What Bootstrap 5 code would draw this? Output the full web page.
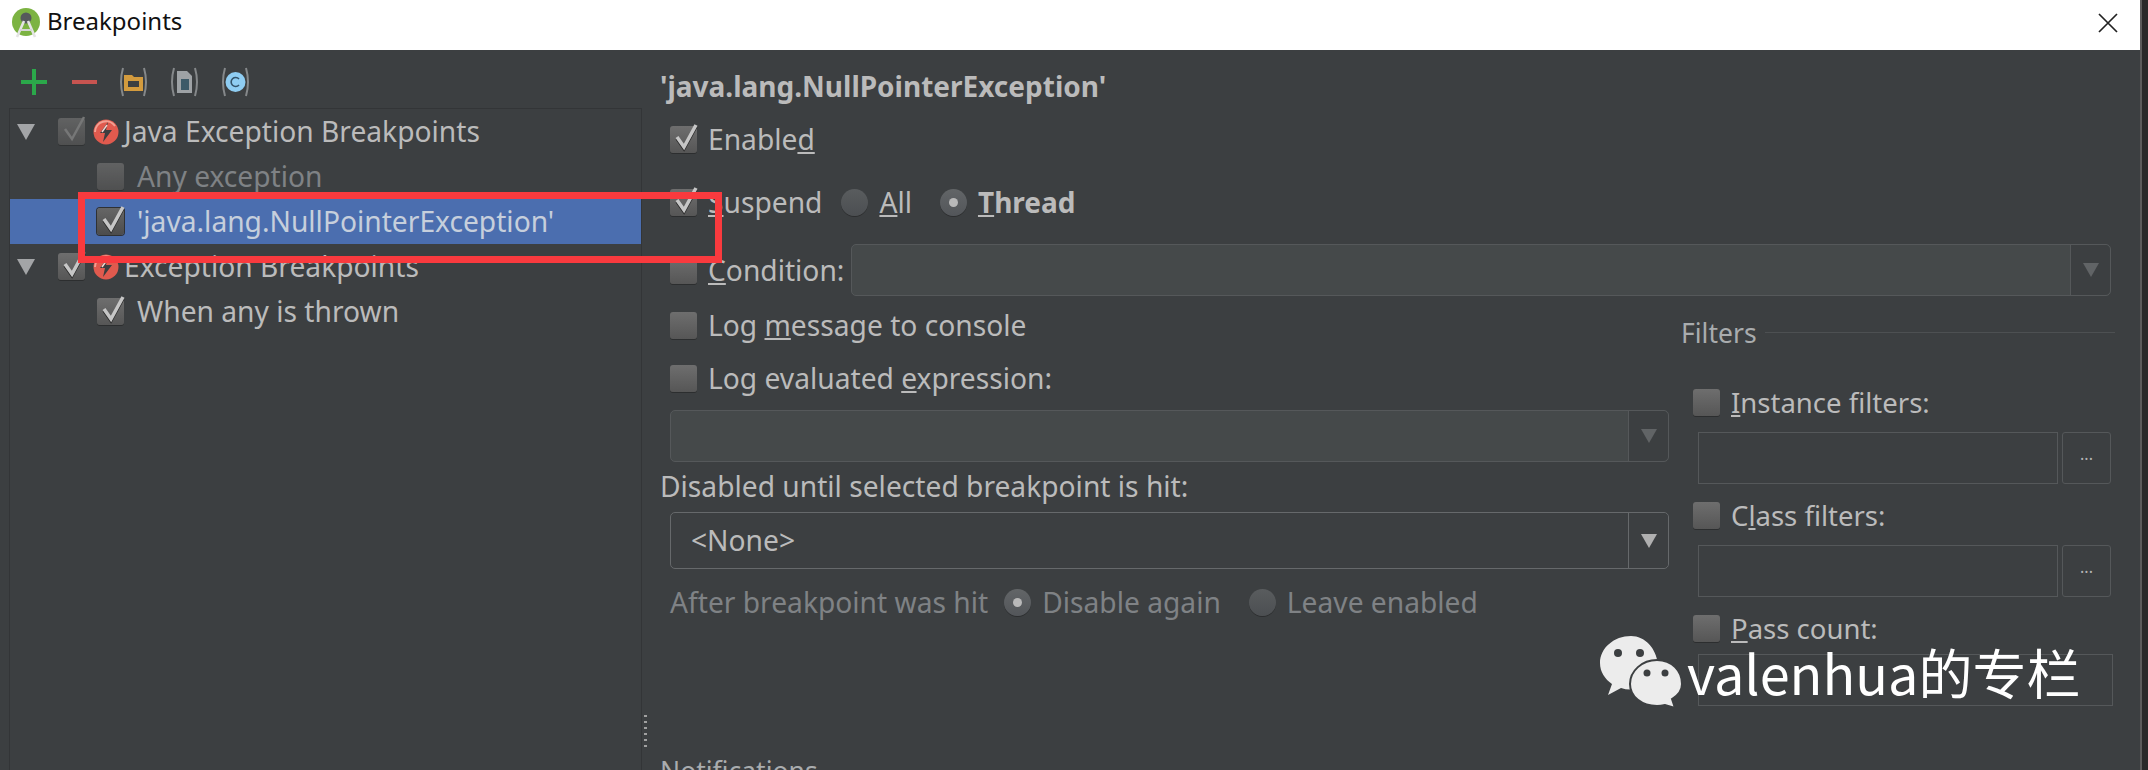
<!DOCTYPE html>
<html lang="en">
<head>
  <meta charset="UTF-8" />
  <title>Breakpoints</title>
  <meta name="viewport" content="width=device-width, initial-scale=1.0" />
  <link href="https://cdn.jsdelivr.net/npm/bootstrap@5.3.0/dist/css/bootstrap.min.css" rel="stylesheet">
  <style>
    html, body { margin: 0; height: 770px; overflow: hidden; background: #2a2a2a; }
    body { font-family: "Noto Sans", "Open Sans", sans-serif; font-size: 28.2px; color: #bbbbbb; }
    .dlg { position: relative; width: 2148px; height: 770px; overflow: hidden; border-right: 6px solid #2a2a2a; }
    .dlg-inner { width: 2142px; height: 770px; border-right: 2px solid #5c5c5c; background: #3c3f41; }
    .title-bar { height: 50px; background: #fff; color: #111; font-size: 24px; padding-left: 12px; padding-bottom: 5px; }
    .title-bar .ttl { margin-left: 7px; margin-top: -4px; }
    .close-x { margin-left: auto; margin-right: 22px; }
    .left-pane { width: 650px; height: 720px; flex: none; position: relative; }
    .tool-row { height: 58px; padding-left: 21px; padding-top: 5px; gap: 22px; }
    .tool-row .plus-ic { margin-right: 3px; }
    .tool-row svg { flex: none; }
    .tree-box { margin-left: 9px; margin-right: 8px; height: 700px; border-left: 1px solid #333537; border-right: 1px solid #333537; border-top: 1px solid #333537; }
    .tree-row { height: 45px; white-space: nowrap; }
    .tree-row.sel { background: #4b6eaf; color: #c6cfdc; }
    .tree-row .arrow { margin-left: 7px; margin-right: 23px; }
    .lvl-1 { padding-left: 87px; }
    .lvl-0-text { margin-left: 5px; }
    .lvl-1-text { margin-left: 13px; }
    .bp-icon { margin-left: 8px; }
    .dim-text { color: #7f8285; }
    .cb { width: 27px; height: 27px; flex: none; border-radius: 3px; background: linear-gradient(#6e6e6e, #565656); box-shadow: 0 1px 0 #2c2e2f; position: relative; display: inline-block; }
    .cb svg { position: absolute; left: 3px; top: -4px; }
    .cb.faded { opacity: .75; }
    .cb.sel-cb { background: linear-gradient(#666, #4c4c4c); box-shadow: 0 0 0 1px #2f3133; }
    .rd { width: 27px; height: 27px; flex: none; border-radius: 50%; background: linear-gradient(#626567, #53565a); box-shadow: 0 1px 0 #2c2e2f; display: inline-flex; align-items: center; justify-content: center; }
    .rd i { width: 9px; height: 9px; border-radius: 50%; background: #b9b9b9; }
    .rd.off-rd { background: linear-gradient(#595c5e, #4c4f52); }
    .rd-first { margin-left: 19px; }
    .rd-next { margin-left: 28px; }
    .rd-text { margin-left: 11px; }
    .right-pane { flex: 1; min-width: 0; padding-left: 10px; padding-right: 25px; }
    .head-row { height: 44px; margin-top: 14px; font-weight: 700; font-size: 28px; color: #bbb; white-space: nowrap; }
    .opt-row { height: 44px; padding-left: 10px; padding-bottom: 2px; white-space: nowrap; }
    .opt-row .cb + span { margin-left: 11px; }
    .opt-row .bold-text { font-weight: 700; font-size: 28px; }
    .mt-enabled { margin-top: 10px; }
    .mt-suspend { margin-top: 19px; }
    .mt-eval { margin-top: 9px; }
    .mt-after { margin-top: 12px; }
    .cond-row { height: 52px; margin-top: 19px; padding-left: 10px; white-space: nowrap; }
    .cond-row .cb + span { margin-left: 11px; }
    .combo { display: flex; border: 1px solid #55585a; border-radius: 5px; background: #45494a; flex: 1; min-width: 0; }
    .combo .val { flex: 1; padding-left: 20px; display: flex; align-items: center; }
    .combo .drop { width: 40px; flex: none; border-left: 1px solid #55585a; background: #3c3f41; display: flex; align-items: center; justify-content: center; border-radius: 0 5px 5px 0; }
    .cond-row .combo { margin-left: 7px; margin-right: 4px; }
    .combo-off { height: 52px; margin-left: 10px; margin-top: 9px; flex: none; }
    .combo-none { height: 57px; margin-left: 10px; margin-top: 3px; flex: none; background: #3c3f41; border-color: #66696b; }
    .combo-none .drop { border-left-color: #66696b; }
    .col-left { width: 1009px; flex: none; }
    .col-right { width: 434px; flex: none; margin-left: 12px; }
    .plain-row { height: 44px; margin-top: 3px; padding-bottom: 2px; white-space: nowrap; }
    .sect-row { height: 44px; margin-top: 16px; white-space: nowrap; color: #a9acae; font-size: 26.5px; }
    .sect-row hr { flex: 1; margin: -4px 0 0 8px; opacity: 1; border: 0; border-top: 1px solid #4d5052; }
    .flt-check { height: 44px; padding-left: 12px; white-space: nowrap; font-size: 27.5px; }
    .flt-check .cb + span { margin-left: 11px; margin-top: 1px; }
    .flt-input { height: 52px; margin-left: 17px; margin-right: 4px; margin-top: 8px; margin-bottom: 9px; }
    .flt-input.last-input { margin-right: 2px; margin-top: 4px; }
    .txt-box { flex: 1; border: 1px solid #55585a; min-width: 0; }
    .dots-btn { width: 49px; flex: none; margin-left: 4px; border: 1px solid #55585a; border-radius: 3px; font-size: 16px; color: #b5b5b5; display: flex; align-items: center; justify-content: center; padding-bottom: 8px; }
    .notif-row { height: 44px; margin-top: 35px; white-space: nowrap; color: #a9acae; font-size: 26.5px; }
    .notif-row hr { flex: 1; margin: 4px 0 0 8px; opacity: 1; border: 0; border-top: 1px solid #4d5052; }
    .grip { position: absolute; left: 644px; top: 715px; width: 3px; height: 33px; background: repeating-linear-gradient(#a0a0a0 0 2px, transparent 2px 6px); }
    .red-frame { position: absolute; left: 78px; top: 192px; width: 644px; height: 71px; border: 7px solid #f93a3e; }
    .wm-logo { position: absolute; left: 1600px; top: 636px; }
    .wm-text { position: absolute; left: 1687px; top: 633px; font-family: "Noto Sans CJK SC", sans-serif; font-size: 54px; line-height: 78px; color: #fff; white-space: nowrap; }
  </style>
</head>
<body>
<svg width="0" height="0" class="position-absolute">
  <symbol id="chk" viewBox="0 0 26 30"><path d="M4 15l7 10L23 3" fill="none" stroke="#2b2b2b" stroke-width="3.5" transform="translate(0 1.5)"/><path d="M4 15l7 10L23 3" fill="none" stroke="#c6c6c6" stroke-width="3.5"/></symbol>
  <symbol id="chk-dim" viewBox="0 0 26 30"><path d="M4 15l7 10L23 3" fill="none" stroke="#8a8a8a" stroke-width="2.5"/></symbol>
  <symbol id="bolt" viewBox="0 0 26 26"><circle cx="13" cy="13" r="12.5" fill="#e05a4e"/><path d="M2 13a11 11 0 0 1 20-6" fill="none" stroke="#f2a093" stroke-width="2"/><path d="M15 3L7 14h5l-2 9 9-12h-6z" fill="#3b3d3f"/><path d="M14 6l-5 7" stroke="#f6d5cf" stroke-width="1.5"/></symbol>
</svg>
<div class="dlg">
  <div class="dlg-inner">
    <div class="title-bar d-flex align-items-center">
      <svg width="28" height="30" viewBox="0 0 28 30">
        <circle cx="14" cy="14" r="14" fill="#7cb342"/>
        <circle cx="14" cy="10" r="5.5" fill="#55595c"/>
        <path d="M12 13L5 29M16 13l7 16" stroke="#e4e4e4" stroke-width="2.6" fill="none"/>
        <path d="M8 22h12" stroke="#d5d5d5" stroke-width="2"/>
      </svg>
      <span class="ttl">Breakpoints</span>
      <svg class="close-x" width="20" height="20" viewBox="0 0 20 20"><path d="M1 1l18 18M19 1L1 19" stroke="#222" stroke-width="1.7"/></svg>
    </div>
    <div class="d-flex">
      <div class="left-pane">
        <div class="tool-row d-flex align-items-center">
          <svg class="plus-ic" width="26" height="26" viewBox="0 0 26 26"><path d="M13 0v26M0 13h26" stroke="#2ba84a" stroke-width="4"/></svg>
          <svg width="25" height="26" viewBox="0 0 25 26"><path d="M0 13h25" stroke="#c75450" stroke-width="4"/></svg>
          <svg width="29" height="30" viewBox="0 0 29 30"><path d="M4 1Q0 15 4 29M25 1q4 14 0 28" fill="none" stroke="#85888a" stroke-width="2"/><path d="M5 8h8l2 2h9v14H5z" fill="#d39b3e"/><rect x="9" y="14" width="11" height="6" fill="#3c3f41"/></svg>
          <svg width="29" height="30" viewBox="0 0 29 30"><path d="M4 1Q0 15 4 29M25 1q4 14 0 28" fill="none" stroke="#85888a" stroke-width="2"/><path d="M7 4h10l5 5v17H7z" fill="#9ea2a5"/><path d="M11 12h8v11h-8z" fill="#3d5a68"/></svg>
          <svg width="29" height="30" viewBox="0 0 29 30"><path d="M4 1Q0 15 4 29M25 1q4 14 0 28" fill="none" stroke="#85888a" stroke-width="2"/><circle cx="14.5" cy="15" r="10" fill="#8fcdf2"/><path d="M18 12a4.5 4.5 0 1 0 0 6" fill="none" stroke="#33536a" stroke-width="1.6"/></svg>
        </div>
        <div class="tree-box">
          <div class="tree-row d-flex align-items-center">
            <svg class="arrow" width="18" height="16" viewBox="0 0 18 16"><path d="M0 0h18L9 16z" fill="#a3a5a7"/></svg>
            <span class="cb faded"><svg width="26" height="30"><use href="#chk-dim"/></svg></span>
            <svg class="bp-icon" width="26" height="26"><use href="#bolt"/></svg>
            <span class="lvl-0-text">Java Exception Breakpoints</span>
          </div>
          <div class="tree-row lvl-1 d-flex align-items-center dim-text">
            <span class="cb faded"></span><span class="lvl-1-text">Any exception</span>
          </div>
          <div class="tree-row sel lvl-1 d-flex align-items-center">
            <span class="cb sel-cb"><svg width="26" height="30"><use href="#chk"/></svg></span><span class="lvl-1-text">'java.lang.NullPointerException'</span>
          </div>
          <div class="tree-row d-flex align-items-center">
            <svg class="arrow" width="18" height="16" viewBox="0 0 18 16"><path d="M0 0h18L9 16z" fill="#a3a5a7"/></svg>
            <span class="cb"><svg width="26" height="30"><use href="#chk"/></svg></span>
            <svg class="bp-icon" width="26" height="26"><use href="#bolt"/></svg>
            <span class="lvl-0-text">Exception Breakpoints</span>
          </div>
          <div class="tree-row lvl-1 d-flex align-items-center">
            <span class="cb"><svg width="26" height="30"><use href="#chk"/></svg></span><span class="lvl-1-text">When any is thrown</span>
          </div>
        </div>
      </div>
      <div class="right-pane">
        <div class="head-row d-flex align-items-center">'java.lang.NullPointerException'</div>
        <div class="opt-row mt-enabled d-flex align-items-center">
          <span class="cb"><svg width="26" height="30"><use href="#chk"/></svg></span><span>Enable<u>d</u></span>
        </div>
        <div class="opt-row mt-suspend d-flex align-items-center">
          <span class="cb"><svg width="26" height="30"><use href="#chk"/></svg></span><span><u>S</u>uspend</span>
          <span class="rd off-rd rd-first"></span><span class="rd-text"><u>A</u>ll</span>
          <span class="rd rd-next"><i></i></span><span class="rd-text bold-text"><u>T</u>hread</span>
        </div>
        <div class="cond-row d-flex align-items-center">
          <span class="cb"></span><span><u>C</u>ondition:</span>
          <div class="combo h-100"><div class="val"></div><div class="drop"><svg width="16" height="14" viewBox="0 0 16 14"><path d="M0 0h16L8 14z" fill="#616466"/></svg></div></div>
        </div>
        <div class="d-flex">
          <div class="col-left">
            <div class="opt-row mt-2 d-flex align-items-center"><span class="cb"></span><span>Log <u>m</u>essage to console</span></div>
            <div class="opt-row mt-eval d-flex align-items-center"><span class="cb"></span><span>Log evaluated <u>e</u>xpression:</span></div>
            <div class="combo combo-off"><div class="val"></div><div class="drop"><svg width="16" height="14" viewBox="0 0 16 14"><path d="M0 0h16L8 14z" fill="#616466"/></svg></div></div>
            <div class="plain-row d-flex align-items-center">Disabled until selected breakpoint is hit:</div>
            <div class="combo combo-none"><div class="val">&lt;None&gt;</div><div class="drop"><svg width="16" height="14" viewBox="0 0 16 14"><path d="M0 0h16L8 14z" fill="#b0b0b0"/></svg></div></div>
            <div class="opt-row mt-after d-flex align-items-center dim-text">
              <span>After breakpoint was hit</span>
              <span class="rd ms-3"><i></i></span><span class="rd-text">Disable again</span>
              <span class="rd off-rd rd-next"></span><span class="rd-text">Leave enabled</span>
            </div>
          </div>
          <div class="col-right">
            <div class="sect-row d-flex align-items-center"><span>Filters</span><hr></div>
            <div class="flt-check mt-4 d-flex align-items-center"><span class="cb"></span><span><u>I</u>nstance filters:</span></div>
            <div class="flt-input d-flex"><div class="txt-box"></div><div class="dots-btn">...</div></div>
            <div class="flt-check d-flex align-items-center"><span class="cb"></span><span>C<u>l</u>ass filters:</span></div>
            <div class="flt-input d-flex"><div class="txt-box"></div><div class="dots-btn">...</div></div>
            <div class="flt-check d-flex align-items-center"><span class="cb"></span><span><u>P</u>ass count:</span></div>
            <div class="flt-input last-input d-flex"><div class="txt-box"></div></div>
          </div>
        </div>
        <div class="notif-row d-flex align-items-center"><span>Notifications</span><hr></div>
      </div>
    </div>
  </div>
  <div class="grip"></div>
  <div class="red-frame"></div>
  <svg class="wm-logo" width="84" height="72" viewBox="0 0 84 72">
    <path d="M31 0C14 0 0 12 0 27c0 9 5 16 12 21l-4 11 13-7c3 1 6 1.5 9 1.5C31 40 43 29 58 28 56 12 45 0 31 0z" fill="#ececec"/>
    <circle cx="18" cy="17" r="4" fill="#3c3f41"/><circle cx="40" cy="17" r="4" fill="#3c3f41"/>
    <path d="M57 24c-15 0-27 11-27 24s12 22 27 22c3 0 5-.3 8-1l10 3-3-9c7-4 10-9 10-15 0-13-10-24-25-24z" fill="#ececec" stroke="#3c3f41" stroke-width="2"/>
    <circle cx="47" cy="37" r="3.5" fill="#3c3f41"/><circle cx="65" cy="37" r="3.5" fill="#3c3f41"/>
  </svg>
  <div class="wm-text">valenhua的专栏</div>
</div>
<script src="https://cdn.jsdelivr.net/npm/bootstrap@5.3.0/dist/js/bootstrap.bundle.min.js"></script>
</body>
</html>
